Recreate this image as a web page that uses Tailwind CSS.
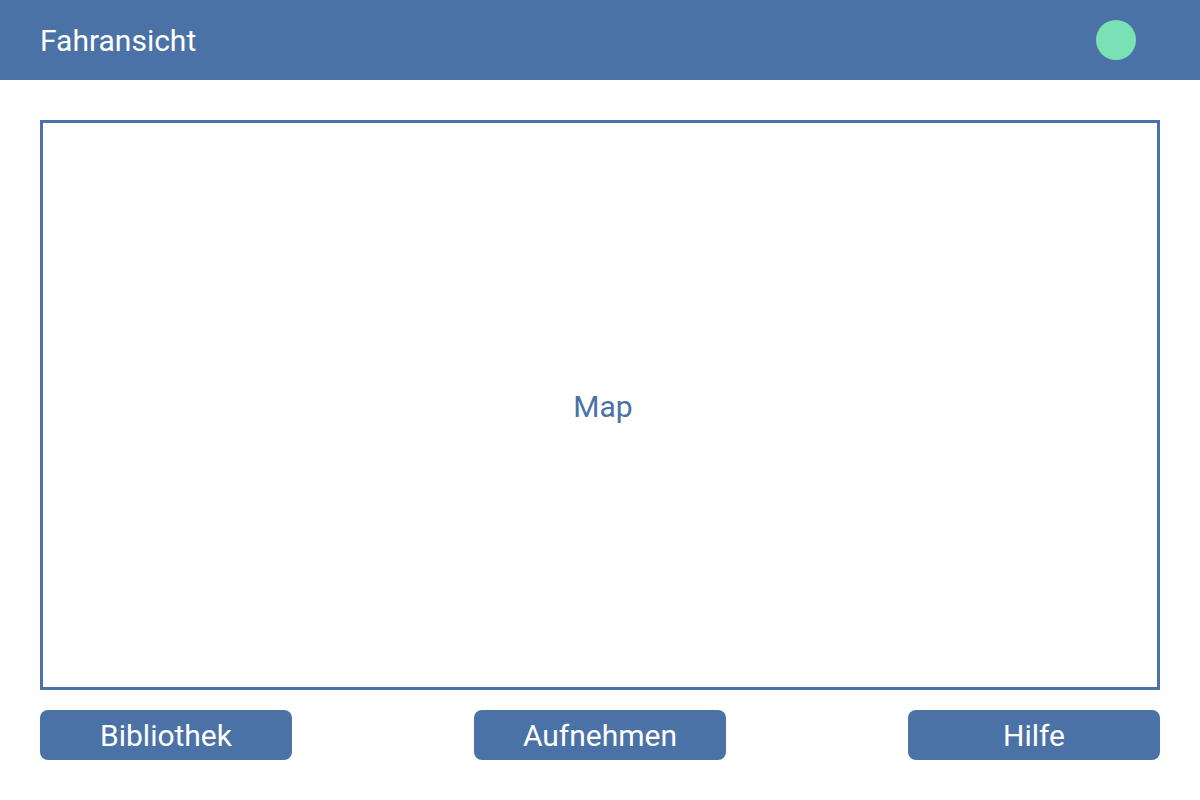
<!DOCTYPE html>
<html lang="de">
<head>
<meta charset="utf-8">
<meta name="viewport" content="width=device-width, initial-scale=1">
<title>Fahransicht</title>
<script src="https://cdn.jsdelivr.net/npm/@tailwindcss/browser@4"></script>
</head>
<body class="flex min-h-screen flex-col bg-white font-[Roboto,sans-serif] text-[30px] leading-[35px]">
<header class="flex h-20 items-center justify-between bg-[#4a72a6] pr-16 pl-10 text-white">
<h1>Fahransicht</h1>
<span class="size-10 rounded-full bg-[#79e1b4]" role="status" aria-label="Status"></span>
</header>
<main class="flex flex-1 flex-col gap-5 p-10">
<section class="flex flex-1 items-center justify-center border-3 border-[#4a72a6] pt-0.5 pl-1.5 text-[#4a72a6]" aria-label="Map">Map</section>
<nav class="flex justify-between gap-5 text-white">
<button type="button" class="h-[50px] w-[252px] rounded-lg bg-[#4a72a6]">Bibliothek</button>
<button type="button" class="h-[50px] w-[252px] rounded-lg bg-[#4a72a6]">Aufnehmen</button>
<button type="button" class="h-[50px] w-[252px] rounded-lg bg-[#4a72a6]">Hilfe</button>
</nav>
</main>
</body>
</html>
